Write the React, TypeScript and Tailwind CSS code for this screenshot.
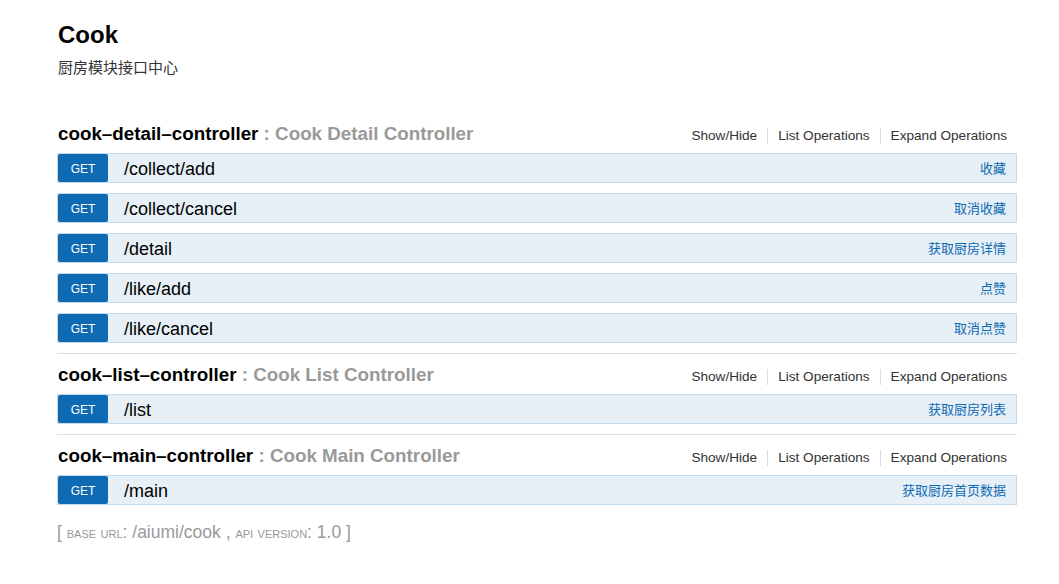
const sans = '"Liberation Sans", "Noto Sans CJK SC", sans-serif';

interface Endpoint {
  path: string;
  summary: string;
}

interface Resource {
  name: string;
  description: string;
  endpoints: Endpoint[];
}

const resources: Resource[] = [
  {
    name: "cook–detail–controller",
    description: "Cook Detail Controller",
    endpoints: [
      { path: "/collect/add", summary: "收藏" },
      { path: "/collect/cancel", summary: "取消收藏" },
      { path: "/detail", summary: "获取厨房详情" },
      { path: "/like/add", summary: "点赞" },
      { path: "/like/cancel", summary: "取消点赞" },
    ],
  },
  {
    name: "cook–list–controller",
    description: "Cook List Controller",
    endpoints: [{ path: "/list", summary: "获取厨房列表" }],
  },
  {
    name: "cook–main–controller",
    description: "Cook Main Controller",
    endpoints: [{ path: "/main", summary: "获取厨房首页数据" }],
  },
];

function EndpointRow({ path, summary }: Endpoint) {
  return (
    <div className="flex items-center h-[30px] mb-[10px] border border-[#c3d9ec] bg-[#e7f0f7]">
      <span className="w-[50px] h-full flex items-center justify-center pt-[2px] bg-[#0f6ab4] text-white text-[12px] rounded-[2px]">
        GET
      </span>
      <span className="ml-[16px] pt-[2px] text-[18px] text-black">{path}</span>
      <span className="ml-auto pr-[10px] pt-[2px] text-[13px] text-[#0f6ab4]">{summary}</span>
    </div>
  );
}

function ResourceSection({ resource, last }: { resource: Resource; last: boolean }) {
  return (
    <div className={last ? "" : "border-b border-[#ddd]"}>
      <div className="h-[40px] flex items-center justify-between pl-px">
        <h2 className="text-[18.8px] font-bold leading-none pt-[2px]">
          <span className="text-black">{resource.name}</span>
          <span className="text-[#999]"> : {resource.description}</span>
        </h2>
        <div className="flex items-center text-[13.6px] text-[#333] pt-[7px]">
          <span className="px-[10px]">Show/Hide</span>
          <span className="px-[10px] border-l border-[#ddd] leading-[16px]">List Operations</span>
          <span className="px-[10px] border-l border-[#ddd] leading-[16px]">Expand Operations</span>
        </div>
      </div>
      {resource.endpoints.map((e) => (
        <EndpointRow key={e.path} {...e} />
      ))}
    </div>
  );
}

export default function App() {
  return (
    <div className="min-h-screen bg-white pl-[57px] pt-[20px]" style={{ fontFamily: sans }}>
      <div className="w-[960px]">
        <h1 className="text-[24px] leading-[30px] font-bold text-black pl-px">Cook</h1>
        <p className="mt-[7px] text-[15px] leading-[21px] text-[#333] pl-px">厨房模块接口中心</p>

        <div className="mt-[35px]">
          {resources.map((r, i) => (
            <ResourceSection key={r.name} resource={r} last={i === resources.length - 1} />
          ))}
        </div>

        <div className="mt-[17px] text-[17.5px] leading-[20px] text-[#999]">
          [ <span className="[font-variant:small-caps] text-[16px]">base url</span>: /aiumi/cook ,{" "}
          <span className="[font-variant:small-caps] text-[16px]">api version</span>: 1.0 ]
        </div>
      </div>
    </div>
  );
}
